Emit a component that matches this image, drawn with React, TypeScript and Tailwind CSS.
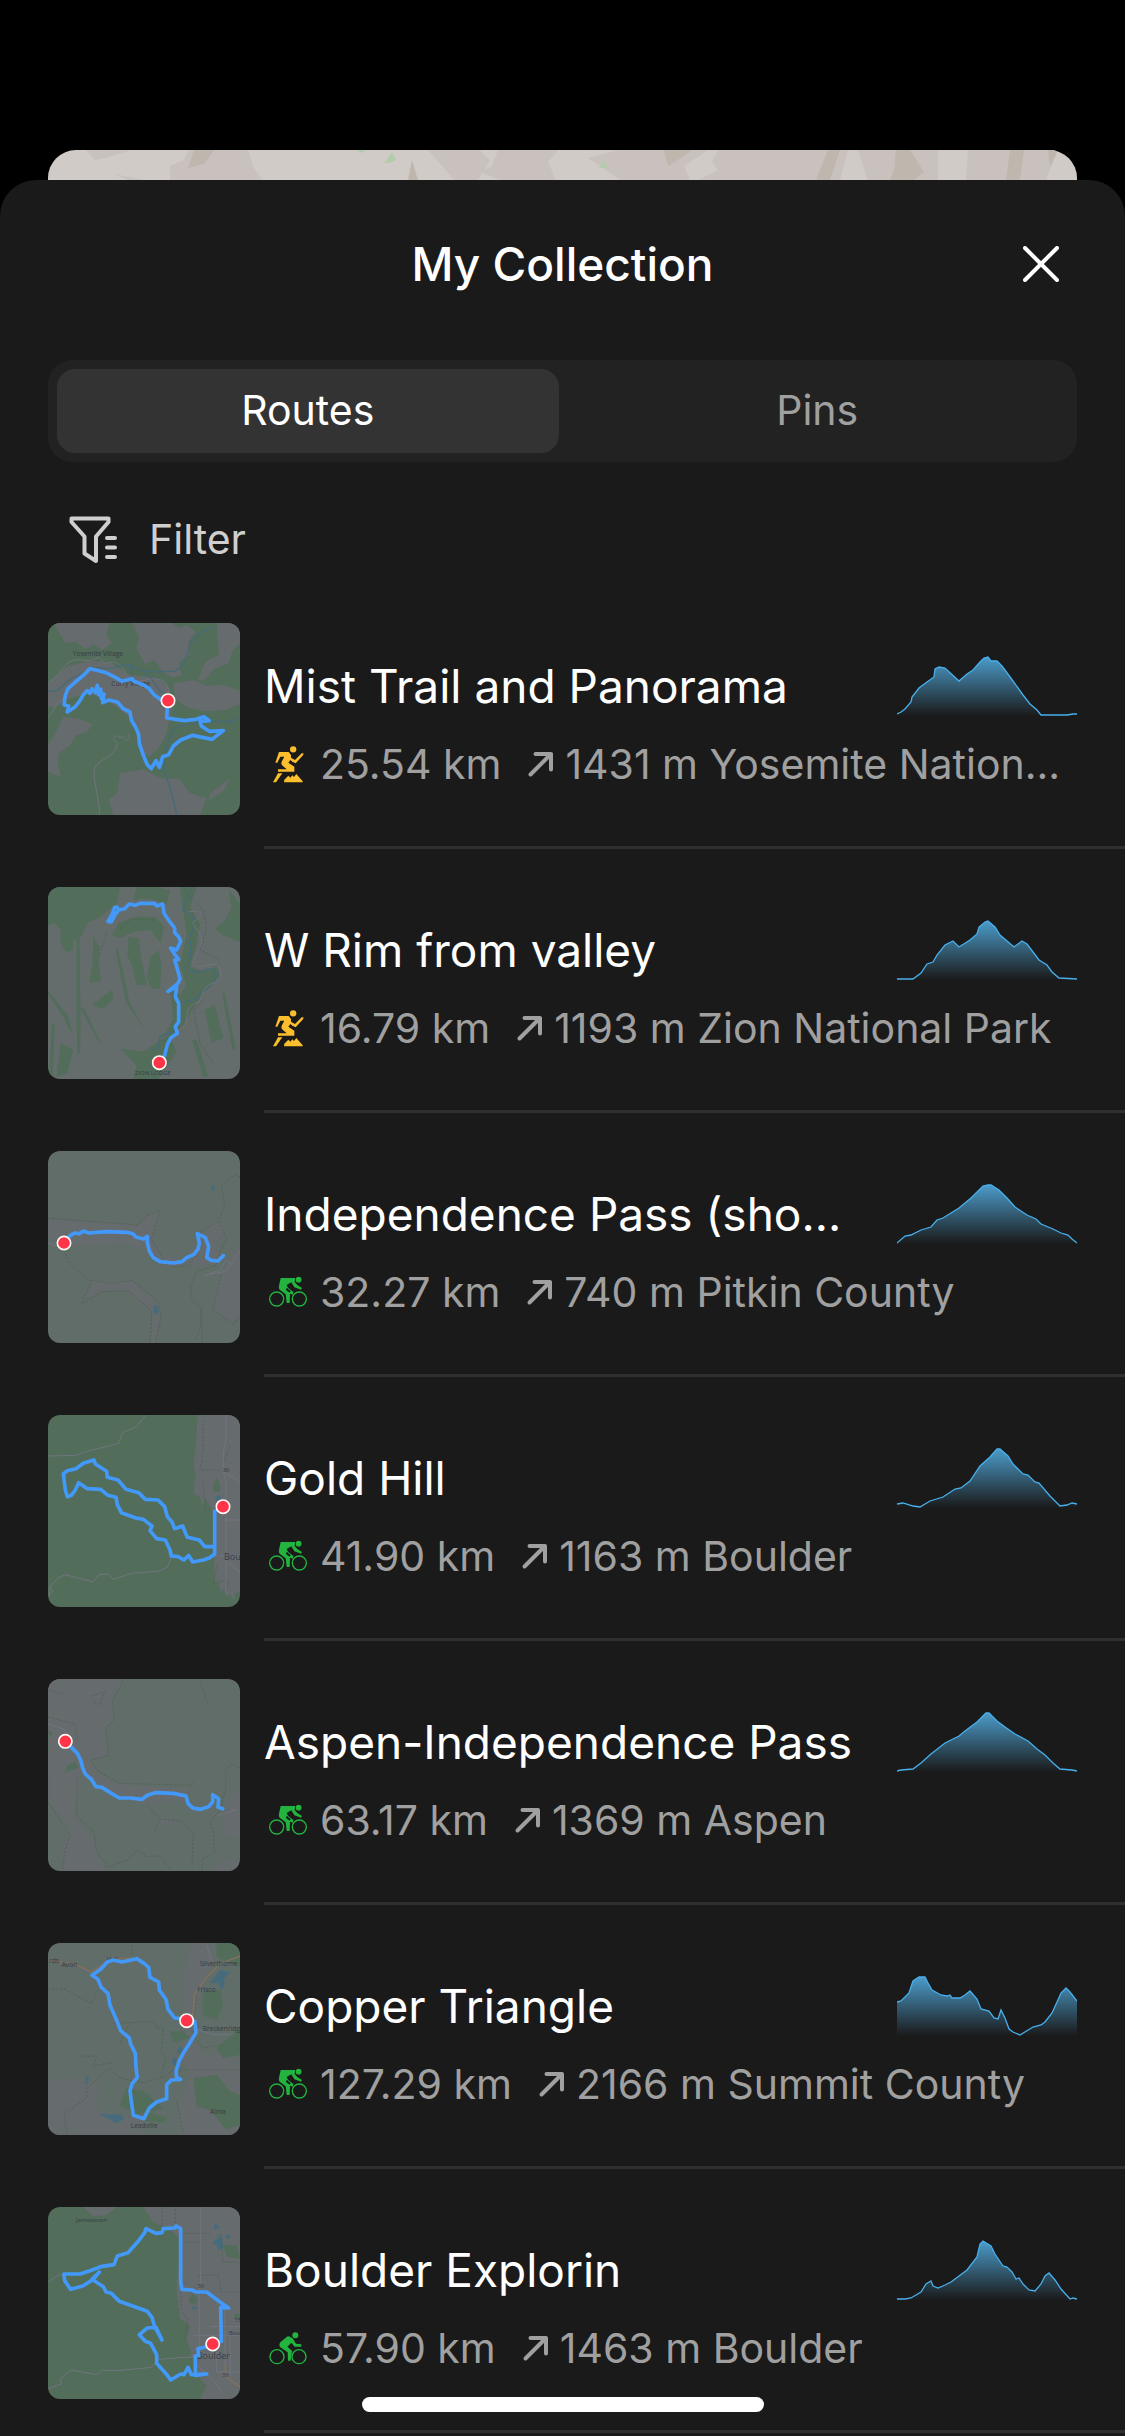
import { useState } from "react";

type Shape = { d: string; kind: "forest" | "land" | "water" | "road" | "trail" | "highway" | "river" };
type Label = { x: number; y: number; text: string; size?: number };

type MapData = {
  view: string;
  base: string;
  shapes: Shape[];
  labels: Label[];
  route: string;
  start: [number, number];
};

type RouteItem = {
  name: string;
  activity: "run" | "bike" | "mtb";
  distance: string;
  climb: string;
  place: string;
  profile: string;
  map: MapData;
};

const FOREST = "#526d5a";
const LAND = "#646c6c";
const SAGE = "#616d68";

const ROUTES: RouteItem[] = [
  {
    name: "Mist Trail and Panorama",
    activity: "run",
    distance: "25.54 km",
    climb: "1431 m",
    place: "Yosemite Nation...",
    profile:
      "0,58 4,56 8,53 14,46 15,41 22,32 30,26 37,21 38,13 42,11 48,12 62,25 70,18 76,14 83,6 87,2 91,1 94,5 100,5 105,10 116,25 126,39 133,48 140,54 144,59 170,59 176,58 180,58",
    map: {
      view: "54 69 576 576",
      base: FOREST,
      shapes: [
        { kind: "land", d: "M70 69h170l-12 34 18 26-30 22-26-18-24 14-28-22-32 4-18-30z" },
        { kind: "land", d: "M305 69h120l20 14 28-8 24 22-22 30 4 36-32 26 8 36-26 8-30-16-26-36-28 10-26-44 8-38z" },
        { kind: "land", d: "M560 69h70v62l-22 22-14 38-42 16-30 36-18-6 22-52 42-22-6-46z" },
        { kind: "land", d: "M54 250l60-52 70-16 60 8 52 34 80 10 38 22 12 70-18 80-26 44-26 20-16-12-18-66-20-36-34-28-46-34-50-14-60 18-30 22-28 0z" },
        { kind: "land", d: "M430 250l60-10 40 18 50-4 50 18v40l-44 18-60 4-50-10-40-26z" },
        { kind: "land", d: "M100 350l50 6 38 18-20 24-28 6-20 32-34 24-4 30 12 40-40-14v-80l22-36z" },
        { kind: "land", d: "M270 520l70-12 50 26 60 4 28 40 52 16-20 51H250l-14-46 26-20z" },
        { kind: "land", d: "M540 580l62-46-20 38-46 30z" },
        { kind: "road", d: "M54 248c40-22 40-54 74-66 24-8 52 8 70-8 22-8 12 24 36 14 40-8 40 20 66 50 20 14 60-6 86 0 34 6 30 40 32 60" },
        { kind: "road", d: "M54 350c20-14 16-40 44-52M208 644c2-60-30-120-8-150 26-24 60-30 62-66-26-12 0-30 10-14 14-14 8 16 24 4 8-10-4-12 2-18" },
        { kind: "river", d: "M54 272c40 10 50-34 86-44 30-12 50-30 80-24 40 6 44-12 82-10 20 26 90 22 130 20 50-20 30-70 60-98 22-24 30-20 50-34M302 194c-2 30 10 34 6 60M340 220c30 6 30 40 60 60M630 352c-20 20-60 10-100 12-40 10-90 6-104 30-26 60-20 90-24 120 22 50 30 90 38 130" },
      ],
      labels: [
        { x: 128, y: 167, text: "Yosemite Village" },
        { x: 244, y: 259, text: "Curry Village" },
      ],
      route:
        "M414 302L394 300 372 284 356 264 338 254 312 244 306 236 276 244 256 232 228 218 206 212 180 206 160 226 136 246 114 266 106 286 102 314 116 318 112 336 136 320 150 302 160 284 172 272 180 280 186 266 196 278 202 256 206 284 212 268 214 296 222 282 218 308 236 300 262 306 280 326 300 336 304 360 318 384 326 404 328 430 340 466 352 494 364 506 378 482 388 502 398 470 416 464 430 438 452 420 488 406 546 418 580 392 538 394 514 378 510 364 538 362 522 350 498 358 462 362 438 358 410 354 412 322",
      start: [414, 302],
    },
  },
  {
    name: "W Rim from valley",
    activity: "run",
    distance: "16.79 km",
    climb: "1193 m",
    place: "Zion National Park",
    profile:
      "0,59 16,59 24,53 30,44 36,42 40,35 48,25 56,21 62,27 73,20 80,14 82,7 88,2 91,1 98,7 103,15 110,21 117,27 125,21 130,24 136,32 142,40 150,45 155,52 162,58 180,59",
    map: {
      view: "54 51 576 576",
      base: LAND,
      shapes: [
        { kind: "forest", d: "M54 51h216l-10 50-50 40-36 16-20 40-26 14 2 26-22 12-18-34 4-34-22-22-18 8z" },
        { kind: "forest", d: "M320 51h60l40 10-10 40-60-16-40 4z" },
        { kind: "forest", d: "M246 196l20-36 50-20 60 0 26 30-10 50-30-40-50 4-40 20z" },
        { kind: "forest", d: "M296 200l30 6 8 60 16 80-30 0-14-60-14-30zM362 260l24-20 8 50-4 66-24 0-16-30z" },
        { kind: "forest", d: "M450 51h50l-20 60 30 50-10 60-20 70 40 14 40-16 10 30-50 50-30 46-30 50-40 40 20 40-60 90h-70l10-50-50-50 70 10 60-40 30-60-10-90 30 20 20-30-20-60 20-90z" },
        { kind: "forest", d: "M596 60l34 40v116l-50-20-26-20 30-22 20-40z" },
        { kind: "forest", d: "M190 200l20 34-6 40 10 60-36 4 10-60zM186 404l60-44 4 26-30 30zM92 520l38 20-20 70-30 10zM524 420l30-16 26 100-36 14z" },
        { kind: "trail", d: "M460 60l60 60 10 60-20 60 60 30M370 150l-60-4-40 30M230 190l-30 90M520 390l-30 30 20 100 40 60" },
        { kind: "forest", d: "M140 204l8-2 4 260-2 90-8 0-2-100zM54 362l60 76 12 46-6 0-18-40-48-72zM160 410l54 112-6-2-56-104zM66 460l8 0-6 160-10 0zM576 370l8 0 34 170-10 0zM486 510l14 0 34 110-14 0zM256 236l8 0 34 160 50 90-60-90z" },
        { kind: "river", d: "M478 51c10 30-30 60-20 70 40 10 40 50 20 80 16 50-10 80 2 100 30 20 60-24 80 10-10 50-46 40-60 76-30 10-50 8-60 16M366 540c20 4 20-10 24-40 30-20 40-6 50-20M368 600l4 27" },
        { kind: "road", d: "M474 126c60-10 40 20 14 30 10 30 40 40 20 80-30 50-20 60 20 50 40-14 60 20 30 50-40 10-40 40-50 60-50 14-30 40-44 70l-20 16" },
      ],
      labels: [{ x: 315, y: 614, text: "ZION LODGE", size: 18 }],
      route:
        "M388 578L404 556 412 524 422 504 442 490 436 470 446 456 446 400 436 380 440 350 414 364 444 340 450 326 440 290 434 270 446 268 432 250 422 234 440 240 452 214 446 200 434 188 434 174 414 148 402 130 398 102 380 108 374 100 330 100 316 106 298 102 284 116 266 120 254 136 244 156 234 154 246 134 254 112 262 112",
      start: [388, 578],
    },
  },
  {
    name: "Independence Pass (sho...",
    activity: "bike",
    distance: "32.27 km",
    climb: "740 m",
    place: "Pitkin County",
    profile:
      "0,59 8,52 14,51 24,46 34,43 40,36 46,34 62,24 74,14 86,2 91,1 94,1 102,6 110,14 118,23 130,31 139,35 144,40 156,45 164,49 171,51 175,55 180,59",
    map: {
      view: "54 48 576 576",
      base: SAGE,
      shapes: [
        { kind: "land", d: "M54 252l270 16 20-24 46-16-24 80 30 50 60 20 40-40 30-60 40-20 20 20-30 60 20 30-60 30-40-10-60 10-60-40-60-30-180 6-60-10z" },
        { kind: "land", d: "M630 330l-46 60-16 40-20 96 64 44 18-30z" },
        { kind: "land", d: "M182 436l50 6 74-4 76 60 10 40-16 86h-16l6-90-70-64-70-8-72 44 30-50z" },
        { kind: "trail", d: "M54 250l270 20 24-28 42-14-26 84 36 60 30 24 40-4 30-30 10-70 50-30" },
        { kind: "trail", d: "M630 126l-16-6-40 30 10 60-18 50 24 50-20 40-10 40-60 20-18 46 2 36 28 26 0 60-14 36M516 520v104" },
        { kind: "trail", d: "M100 346l24 44 60 50-30 66 60-36 82-2 70 60-6 96M184 436l60 10 64-10 76 64 10 46-18 78M574 420l-26 104 64 44 16-28" },
        { kind: "water", d: "M370 514l10-4 6 18-8 12-6-10zM543 152h8l4 14-8 2z" },
        { kind: "road", d: "M54 324l30 10M520 424l50-20 20-30 12 14M540 418l50-10 40-60" },
      ],
      labels: [],
      route:
        "M102 324L120 302 134 294 148 296 160 288 176 294 230 290 290 292 308 296 318 306 340 312 352 304 352 322 358 348 370 368 390 380 430 384 456 380 470 368 492 358 504 342 508 324 502 296 526 308 536 334 530 368 544 376 564 378 580 362",
      start: [102, 324],
    },
  },
  {
    name: "Gold Hill",
    activity: "bike",
    distance: "41.90 km",
    climb: "1163 m",
    place: "Boulder",
    profile:
      "0,56 6,55 16,58 23,59 33,53 46,49 58,41 64,40 73,33 83,18 93,9 100,1 103,1 111,8 116,16 126,26 131,27 138,34 142,35 153,48 163,58 170,57 175,55 180,56",
    map: {
      view: "54 45 576 576",
      base: FOREST,
      shapes: [
        { kind: "land", d: "M502 45h128v530l-14 4-4 24-12-20-12 6-6-26-10 14-4-28-14-4-2-70 4-90-14-60-16-30-8 24-8-26-20-14 6-50-6-40 8-60z" },
        { kind: "forest", d: "M552 250l8-14 10 14v26l-22-2z" },
        { kind: "trail", d: "M520 60v90l-10 60 60 0M600 140l-18 46M520 250l6 80M560 500l-8 50 40-10v30" },
        { kind: "road", d: "M54 168l84-2 32-12 34-8 62-16 12-32 40-18 32-36M588 45l0 60-8 60 0 50 8 30v216l0 120M580 215l50 30M588 360h42M555 468h75M596 490l34 26" },
        { kind: "road", d: "M58 586l10-14-8-12 24-26 22-10 84 22 16-22 30-2 14 16 54-18 80-6 28-12 12-28M58 560l0 30" },
        { kind: "water", d: "M556 288l16-2v12l-14 4z" },
      ],
      labels: [
        { x: 578, y: 216, text: "36", size: 18 },
        { x: 582, y: 480, text: "Bou", size: 27 },
      ],
      route:
        "M576 322L554 334 554 462 538 474 520 480 488 486 476 466 462 480 444 470 424 468 420 450 406 420 380 416 360 392 366 378 340 358 318 354 274 338 262 314 258 292 234 286 212 268 172 266 146 248 136 270 124 286 112 290 106 270 100 222 112 212 138 206 160 190 192 180 196 192 230 214 232 232 264 240 288 268 326 278 346 298 384 300 404 320 412 350 426 366 434 386 458 378 472 412 508 420 524 440 552 440",
      start: [579, 320],
    },
  },
  {
    name: "Aspen-Independence Pass",
    activity: "bike",
    distance: "63.17 km",
    climb: "1369 m",
    place: "Aspen",
    profile:
      "0,59 4,58 16,57 24,51 34,42 48,31 62,24 68,19 80,10 89,1 92,1 100,9 108,15 118,22 131,29 140,37 148,43 156,51 163,57 175,58 180,59",
    map: {
      view: "54 45 576 576",
      base: SAGE,
      shapes: [
        { kind: "land", d: "M54 45h224l-30 60 4 60-26 30 8 80-52 14 20 34 60 38 214 12-10 40-90 0-30 6-70-16-66-38-60-30-6 40-6 60 10 50 46 34 4 50 30 52H100l-8-60 28-70-60-70z" },
        { kind: "land", d: "M630 380l-36 30-20 60 4 40 52 12zM552 612l20-24 40-2 18 20v15h-78zM380 490l10-30 60 10 40 40-10-4-40-30z" },
        { kind: "forest", d: "M104 326l8-22 24-12 10 18zM54 200l14 6-6 14z" },
        { kind: "trail", d: "M278 50l-30 60 4 60-24 20 8 84-54 14 24 36 64 34 212 6 8-12" },
        { kind: "trail", d: "M142 340l-2 120 50 40 10 60 34 50 60-24 30-28 26 20 40-2 36 44M54 414l66 100-16 50-6 56" },
        { kind: "trail", d: "M630 312l-24-12-20 20 2 50-18 70-30 30 12 36 0 60-36 20v34M376 500l14-34-40-46M390 466l60 4 40 40-4 100M186 96l38-14-14 40-20-8M510 50l24 70M60 80l40 10M54 160l80 20 10 44-60 20" },
        { kind: "road", d: "M54 180l50 16 20 44M560 456l60-20" },
      ],
      labels: [],
      route:
        "M106 232L122 248 142 268 152 288 158 312 166 330 184 346 198 368 216 370 244 388 268 402 300 402 336 406 352 394 376 386 430 388 468 396 474 418 488 432 512 436 536 428 548 414 548 392 566 404 564 430 578 434",
      start: [106, 232],
    },
  },
  {
    name: "Copper Triangle",
    activity: "bike",
    distance: "127.29 km",
    climb: "2166 m",
    place: "Summit County",
    profile:
      "0,26 4,25 12,17 16,5 22,1 28,1 31,7 35,14 44,19 50,20 53,19 55,22 63,22 68,19 73,15 80,23 84,33 92,35 97,42 101,43 104,34 108,42 112,53 116,56 123,59 136,51 144,49 148,46 155,37 160,26 164,17 169,12 173,16 180,25",
    map: {
      view: "54 45 576 576",
      base: SAGE,
      shapes: [
        { kind: "land", d: "M480 45h60l10 60-30 60-20 80 0 100 30 40 70-10 30 60v186H450l-10-80 40-100-30-60 20-80-10-120z" },
        { kind: "land", d: "M54 460l100-10 60 20-20 60 40 30 100 10v51H54z" },
        { kind: "forest", d: "M560 45h70v70l-40-10-30-20zM520 190l50-6 10 50-20 40-40-10zM560 360l70-60v80l-50 10zM490 450l70-10 40 50 30 10v90l-40 16-50-60-40-10zM290 480l50 10 60 50-80 20-50-30zM420 310l40 0 20 20-50 14zM350 550l60 20-10 14-60-6z" },
        { kind: "water", d: "M540 166l30-40 30 6-18 20 2 20-12 14-6-22zM206 558l70 2 6 14-24 12-20-14zM440 366l14-12 6 14-14 10zM430 386l10 6-2 22-12-8zM170 444l8 2-8 24-6-2z" },
        { kind: "highway", d: "M54 96l80 12 50 24 60-38 60-4M630 84l-60 24-40 40-36 50-6 70" },
        { kind: "trail", d: "M306 50v36M54 184l50 0 80 42 20-40 36 0M250 286l120-6 10 20 20 0-6 70 14 20-16 60-50 14-74-14-30-30-70 64 4 24-70 50 10 70M396 450l34-24h130l70 0M150 384l50 0-10 30 60-10M500 200l-12 120 30 40 60-10M440 520l20 96M300 284l-30 60" },
        { kind: "road", d: "M530 50l16 50M490 300l60 20 60 0" },
      ],
      labels: [
        { x: 57, y: 105, text: "rds" },
        { x: 95, y: 117, text: "Avon" },
        { x: 230, y: 103, text: "Vail" },
        { x: 509, y: 113, text: "Silverthorne" },
        { x: 502, y: 192, text: "Frisco" },
        { x: 518, y: 308, text: "Breckenridg" },
        { x: 540, y: 557, text: "Alma" },
        { x: 302, y: 599, text: "Leadville" },
      ],
      route:
        "M470 278L494 280 498 314 480 344 462 372 448 398 438 430 440 448 452 454 424 456 410 470 410 512 380 522 358 540 342 572 310 562 304 520 300 488 306 468 322 448 318 420 316 376 302 348 298 330 272 308 258 272 240 232 234 196 214 178 204 154 186 142 212 124 232 102 250 96 276 102 320 92 342 106 356 118 360 148 386 162 388 186 408 214 414 244 434 270 460 272",
      start: [470, 278],
    },
  },
  {
    name: "Boulder Explorin",
    activity: "mtb",
    distance: "57.90 km",
    climb: "1463 m",
    place: "Boulder",
    profile:
      "0,59 8,59 14,58 24,52 29,44 34,41 36,46 41,48 48,45 54,42 70,30 80,17 83,4 86,1 94,6 98,14 106,26 110,27 115,32 119,39 122,38 126,44 132,50 138,51 144,44 148,36 152,33 158,40 164,49 173,59 176,58 180,59",
    map: {
      view: "54 45 576 576",
      base: FOREST,
      shapes: [
        { kind: "land", d: "M340 45h290v576H510l20-40-20-20-20-60-20-60 10-40-30-20-10-80 10-160-30-30-50-20zM160 45h100l-30 24-40 4z" },
        { kind: "forest", d: "M580 160l40 0 10 40-40-6zM480 320l10-16 10 14v16h-22zM614 366h16v16h-16z" },
        { kind: "water", d: "M550 148l14-8 2-12 10 10 4 30-14 8-6-20-10 2zM552 98l14 0 0 12-12 2zM586 128h14v10l-12 2zM484 344h16v8h-14z" },
        { kind: "trail", d: "M396 45v60M436 50v60M464 124h76v0M464 150h40M574 126l4 84 50 2M454 180v180l20 20-10 60M504 250h60l10 50 54 0M480 290v40" },
        { kind: "road", d: "M512 45v220l-4 30 0 200M54 270l30-20 20-4M54 590l40-14-2-16 30-26 80 14 12-14 50 2 100-10 20-24 80-6 40 0M585 350v170M540 404h90M490 430h140M600 404v150M500 520l40 34 40 50M480 490h100M560 480v60h70" },
        { kind: "highway", d: "M586 516v36l44 34" },
      ],
      labels: [
        { x: 138, y: 90, text: "Jamestown", size: 18 },
        { x: 503, y: 287, text: "36", size: 17 },
        { x: 613, y: 389, text: "15", size: 17 },
        { x: 597, y: 428, text: "Bou", size: 18 },
        { x: 500, y: 500, text: "Boulder", size: 27 },
        { x: 577, y: 555, text: "36", size: 17 },
      ],
      route:
        "M548 456L574 448 572 346 596 348 570 330 530 300 498 300 486 294 456 292 452 270 452 110 438 102 434 108 400 110 396 122 378 124 348 110 344 122 326 146 294 182 262 192 252 218 212 224 180 236 150 246 102 246 104 266 122 292 158 282 190 262 208 240 186 262 220 284 228 300 244 304 268 328 318 346 352 358 366 376 374 404 396 444 378 406 352 408 328 428 346 448 362 454 380 488 380 514 396 532 412 550 422 564 452 546 462 548 474 526 484 548 530 546 496 550 496 492 506 490 504 470 530 464",
      start: [548, 456],
    },
  },
];

const FILLS: Partial<Record<Shape["kind"], string>> = { forest: FOREST, land: "#666b6e", water: "#466b7d" };
const STROKES: Partial<Record<Shape["kind"], [string, number, string?]>> = {
  road: ["#72747f", 3],
  river: ["#476a78", 4],
  trail: ["#4c604e", 2, "7 5"],
  highway: ["#80705f", 5],
};

function RouteMap({ map, name }: { map: MapData; name: string }) {
  return (
    <svg viewBox={map.view} role="img" aria-label={name + " map"} className="mt-[38px] size-48 shrink-0 rounded-xl">
      <rect x="0" y="0" width="700" height="700" fill={map.base} />
      {map.shapes.map((s, i) => {
        const stroke = STROKES[s.kind];
        return stroke ? (
          <path key={i} d={s.d} fill="none" stroke={stroke[0]} strokeWidth={stroke[1]} strokeDasharray={stroke[2]} strokeLinejoin="round" />
        ) : (
          <path key={i} d={s.d} fill={FILLS[s.kind]} />
        );
      })}
      {map.labels.map((l, i) => (
        <text key={i} x={l.x} y={l.y} fontSize={l.size ?? 20} fill="#363c45" className="font-['Open_Sans',sans-serif]">
          {l.text}
        </text>
      ))}
      <path d={map.route} fill="none" stroke="#4299fa" strokeWidth="11" strokeLinejoin="round" strokeLinecap="round" />
      <circle cx={map.start[0]} cy={map.start[1]} r="20" fill="#ff3448" stroke="#fdf6f3" strokeWidth="5" />
    </svg>
  );
}

function Profile({ points, id }: { points: string; id: string }) {
  return (
    <svg viewBox="0 0 180 60" className="h-[60px] w-[180px] shrink-0" aria-hidden="true">
      <defs>
        <linearGradient id={id} gradientUnits="userSpaceOnUse" x1="0" y1="0" x2="0" y2="60">
          <stop offset="0" stopColor="#55b5ec" stopOpacity="0.85" />
          <stop offset="1" stopColor="#55b5ec" stopOpacity="0" />
        </linearGradient>
      </defs>
      <polygon points={"0,60 " + points + " 180,60"} fill={`url(#${id})`} />
      <polyline points={points} fill="none" stroke="#47b0ee" strokeWidth="1.3" />
    </svg>
  );
}

function ActivityIcon({ type }: { type: RouteItem["activity"] }) {
  if (type === "run") {
    return (
      <svg viewBox="56 284 114 114" className="size-[38px]" fill="#fbbf2d" aria-label="Trail run">
        <circle cx="128.500" cy="297" r="9.500" />
        <path d="M86 305h29l7 9 0 8 12 7 20-20 6 0-2 6-22 24-10-5-6-5-6 8 18 12v15H83v-7h26l-12-11q-6-5-3-12l8-15H90l-9 18h-6z" />
        <path d="M83 369h13l-19 27h-9z" />
        <path d="M101 396l1-8 12-12 6 6 6-7 5 5 7-9 19 22v3z" />
      </svg>
    );
  }
  if (type === "mtb") {
    return (
      <svg viewBox="57 6 114 114" className="size-[38px]" fill="#23b33f" aria-label="Mountain bike">
        <g fill="none" stroke="#23b33f" strokeWidth="4">
          <circle cx="81" cy="89" r="21" />
          <circle cx="147" cy="89" r="21" />
        </g>
        <circle cx="136" cy="25" r="9" />
        <path d="M116 28l12 6 10 16 16 2v7l-20 0-10-12-12 12 14 12-4 30h-8l-1-25-24-17q-4-6 2-13l18-15q4-4 7-3z" />
      </svg>
    );
  }
  return (
    <svg viewBox="57 6 114 114" className="size-[38px]" fill="#23b33f" aria-label="Road bike">
      <g fill="none" stroke="#23b33f" strokeWidth="4">
        <circle cx="80" cy="84" r="21" />
        <circle cx="148" cy="84" r="21" />
      </g>
      <circle cx="146" cy="26" r="8.500" />
      <path d="M92 21h44l-2 12 8 9 14 9-3 5-20-7-9-15-14 8 4 8 16 13-2 8-8-3-1 28h-9l-3-26-18-14q-4-5-2-12z" />
      <path d="M110 50l12 10-3 5-11-8z" fill="#1a1a1a" />
    </svg>
  );
}

function ClimbArrow() {
  return (
    <svg viewBox="0 0 24 24" className="mr-3 ml-7 size-6 shrink-0 overflow-visible" fill="none" stroke="#a0a0a0" strokeWidth="4" strokeLinecap="round" strokeLinejoin="round" aria-hidden="true">
      <path d="M1.500 22.500L22 2M6.500 2H22v15.500" />
    </svg>
  );
}

function FilterIcon() {
  return (
    <svg viewBox="0 0 48 48" className="size-12" fill="none" stroke="#cfcfcf" strokeWidth="4" strokeLinejoin="round" strokeLinecap="round" aria-hidden="true">
      <path d="M2.500 2.500h37v3.500L27 20.500V45L15.500 37.500V20.500L2.500 6z" />
      <path d="M38 22h8M38 31.500h8M38 41h8" />
    </svg>
  );
}

export default function App() {
  const [tab, setTab] = useState("Routes");

  return (
    <div className="flex min-h-screen flex-col overflow-hidden bg-black pt-[150px] font-['Inter',sans-serif] text-white">
      {/* Map behind the sheet */}
      <div className="mx-12 h-[30px] overflow-hidden rounded-t-[28px] bg-[#d0cbc7]">
        <svg viewBox="0 0 1029 30" preserveAspectRatio="none" className="h-full w-full" aria-hidden="true">
          <path fill="#c8c1bd" d="M38 0h45l-22 7-14 3zM140 0h60l6 18 8 12h-92V16l14-6zM66 24l30 6H80zM380 0h52l10 10-12 20h-24l-12-14zM450 0h60l-10 12 8 18h-56l-20-8 12-6zM540 8l30-8h90l-24 16 6 14h-70l-14-10zM670 0h130l-8 30H650l20-10-6-8zM810 0h80v30h-70zM920 0h90l-12 30h-80z" />
          <path fill="#bfb6ae" d="M146 0h20l-10 14-16 4zM360 30l4-20 6 20zM616 0h28l-8 6-16 10zM780 0h12l-10 30h-14zM848 0h14l14 22-10 8h-24l4-10zM962 0h14l-4 30h-14zM1000 0h10l-8 16z" />
          <path fill="#b4ccae" d="M336 13l8-11 4 8-6 3zM308 0h10l-4 3zM551 18l4-8 5 8z" />
        </svg>
      </div>

      <main className="flex flex-1 flex-col rounded-t-[36px] bg-[#1a1a1a]">
        <header className="grid h-[168px] grid-cols-[1fr_auto_1fr] items-center px-12">
          <h1 className="col-start-2 text-[46px] font-medium">My Collection</h1>
          <button type="button" aria-label="Close" className="justify-self-end p-[18px]">
            <svg viewBox="0 0 36 36" className="size-9" stroke="white" strokeWidth="4" strokeLinecap="round">
              <path d="M2 2l32 32M34 2L2 34" />
            </svg>
          </button>
        </header>

        {/* Tabs */}
        <div role="tablist" className="mx-12 mt-3 grid grid-cols-2 gap-2 rounded-3xl bg-[#222222] p-[9px]">
          {["Routes", "Pins"].map((t) => (
            <button
              key={t}
              type="button"
              role="tab"
              aria-selected={tab === t}
              onClick={() => setTab(t)}
              className={
                tab === t
                  ? "h-[84px] rounded-[18px] bg-[#333333] text-[41px] text-white"
                  : "h-[84px] rounded-[18px] text-[41px] text-[#a0a0a0]"
              }
            >
              {t}
            </button>
          ))}
        </div>

        <button type="button" className="mt-[42px] mb-[9px] ml-[69px] flex h-[72px] items-center gap-8 self-start text-[41px] text-[#cfcfcf]">
          <FilterIcon />
          Filter
        </button>

        {/* Saved routes */}
        <ul>
          {ROUTES.map((r, i) => (
            <li key={r.name} className="flex gap-6 pl-12">
              <RouteMap map={r.map} name={r.name} />
              <div className="min-w-0 flex-1 border-b-[3px] border-[#303030] pt-[71px] pr-12 pb-[58px]">
                <div className="flex h-[60px] items-center gap-8">
                  <h2 className="min-w-0 flex-1 truncate text-[46px] leading-[60px]">{r.name}</h2>
                  <Profile points={r.profile} id={"profile-" + i} />
                </div>
                <div className="mt-6 flex h-12 items-center text-[41px] leading-[48px] text-[#a0a0a0]">
                  <span className="mr-2 flex w-12 shrink-0 justify-center">
                    <ActivityIcon type={r.activity} />
                  </span>
                  <span className="whitespace-nowrap">{r.distance}</span>
                  <ClimbArrow />
                  <span className="min-w-0 truncate leading-[54px]">
                    {r.climb} {r.place}
                  </span>
                </div>
              </div>
            </li>
          ))}
        </ul>
      </main>

      {/* Home indicator */}
      <div className="fixed bottom-6 left-1/2 h-[15px] w-[402px] -translate-x-1/2 rounded-full bg-white" />
    </div>
  );
}
